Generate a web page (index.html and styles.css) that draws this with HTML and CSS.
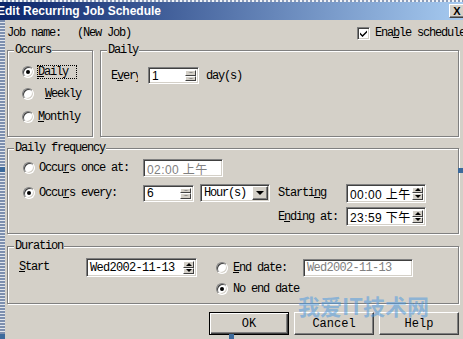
FILE: index.html
```html
<!DOCTYPE html>
<html lang="en">
<head>
  <meta charset="UTF-8" />
  <title>Edit Recurring Job Schedule</title>
  <link rel="stylesheet" href="styles.css">
</head>
<body>
  <div class="window">
    <div class="dots"></div>
    <div class="titlebar">
      <span class="title">Edit Recurring Job Schedule</span>
      <span class="close">X</span>
    </div>
    <div class="frame">
      <div class="edge"></div>
      <div class="content">
        <div class="jobrow">
          <span class="jobname">Job name:</span>
          <span>(New Job)</span>
          <span class="enable">
            <span class="checkbox">
              <svg width="9" height="9" viewBox="0 0 9 9"><path d="M1 3.5 L3.5 6 L8 1.5 L8 3.5 L3.5 8 L1 5.5 Z" fill="#000"/></svg>
            </span>
            <span>Ena<u>b</u>le schedule</span>
          </span>
        </div>

        <div class="toprow">
          <div class="group occurs">
            <span class="legend">Occurs</span>
            <div class="option"><span class="radio on"></span><span class="focus"><u>D</u>aily</span></div>
            <div class="option"><span class="radio"></span><span class="indent"><u>W</u>eekly</span></div>
            <div class="option"><span class="radio"></span><span><u>M</u>onthly</span></div>
          </div>
          <div class="group daily">
            <span class="legend">Daily</span>
            <div class="every">
              <span class="every-label">E<u>v</u>ery</span>
              <span class="field num spin-every">1<span class="spinbtns faint"><i class="up"></i><i class="down"></i></span></span>
              <span class="days">day(s)</span>
            </div>
          </div>
        </div>

        <div class="group freq">
          <span class="legend">Daily frequency</span>
          <div class="frow frow1">
            <span class="fopt"><span class="radio"></span><span>Occu<u>r</u>s once at:</span></span>
            <span class="field time disabled once">02:00 上午</span>
          </div>
          <div class="frow frow2">
            <span class="fopt"><span class="radio on"></span><span>Occu<u>r</u>s every:</span></span>
            <span class="field num spin-six">6<span class="spinbtns faint"><i class="up"></i><i class="down"></i></span></span>
            <span class="field select">Hour(s)<span class="dropbtn"><i class="down"></i></span></span>
            <span class="tlabel">Starti<u>n</u>g</span>
            <span class="field time clock">00:00 上午<span class="spinbtns"><i class="up"></i><i class="down"></i></span></span>
          </div>
          <div class="frow frow3">
            <span class="tlabel">E<u>n</u>ding at:</span>
            <span class="field time clock">23:59 下午<span class="spinbtns"><i class="up"></i><i class="down"></i></span></span>
          </div>
        </div>

        <div class="group duration">
          <span class="legend">Duration</span>
          <span class="start-label"><u>S</u>tart</span>
          <span class="field date start-date">Wed2002-11-13<span class="spinbtns"><i class="up"></i><i class="down"></i></span></span>
          <div class="dcol">
            <div class="drow drow1">
              <span class="radio"></span>
              <span class="end-label"><u>E</u>nd date:</span>
              <span class="field date disabled end-date">Wed2002-11-13</span>
            </div>
            <div class="drow drow2">
              <span class="radio on"></span>
              <span>No end date</span>
            </div>
          </div>
        </div>

        <div class="buttons">
          <button class="btn default">OK</button>
          <button class="btn">Cancel</button>
          <button class="btn">Help</button>
        </div>
      </div>
    </div>

    <span class="handle h-left"></span>
    <span class="handle h-right"></span>
    <span class="handle h-bottom"></span>
    <span class="handle h-corner"></span>
    <span class="watermark">我爱IT技术网</span>
  </div>
</body>
</html>
```

FILE: styles.css
```css
body {
  margin: 0;
  background-color: #d4d0c8;
  font-family: "Liberation Mono", "Courier New", "Noto Sans CJK SC", monospace;
  font-size: 12px;
  letter-spacing: -1.2px;
  color: #000;
  overflow: hidden;
}

.window {
  position: relative;
  width: 463px;
  height: 339px;
  overflow: hidden;
}

.dots {
  height: 2px;
  background: repeating-linear-gradient(90deg, #f2f4f8 0 2px, #8a9bb8 2px 4px);
}

.titlebar {
  display: flex;
  align-items: center;
  height: 18px;
  background: linear-gradient(90deg, #0a246a, #a6caf0);
}

.title {
  margin-left: -3px;
  color: #fff;
  font: bold 12px "Liberation Sans Narrow", "Liberation Sans", Arial, sans-serif;
  letter-spacing: 0;
  white-space: nowrap;
}

.close {
  margin-left: auto;
  margin-right: -2px;
  width: 16px;
  height: 14px;
  box-sizing: border-box;
  background-color: #d4d0c8;
  border: 1px solid;
  border-color: #fff #404040 #404040 #fff;
  box-shadow: inset -1px -1px #808080;
  font: bold 11px "Liberation Sans", Arial, sans-serif;
  letter-spacing: 0;
  line-height: 12px;
  text-align: center;
}

.frame {
  display: flex;
  height: 319px;
}

.edge {
  width: 5px;
  background: repeating-linear-gradient(180deg, #7d8fae 0 2px, #e2e6ec 2px 3px);
}

.content {
  flex: 1;
  min-width: 0;
  padding: 0 4px 0 2px;
}

/* job name row */

.jobrow {
  display: flex;
  align-items: center;
  height: 14px;
  margin-top: 6px;
  white-space: nowrap;
}

.jobname {
  width: 70px;
}

.enable {
  display: flex;
  align-items: center;
  gap: 5px;
  margin-left: auto;
  margin-right: -6px;
}

.checkbox {
  display: flex;
  align-items: center;
  justify-content: center;
  width: 13px;
  height: 13px;
  box-sizing: border-box;
  background-color: #fff;
  border: 1px solid;
  border-color: #808080 #fff #fff #808080;
  box-shadow: inset 1px 1px #404040, inset -1px -1px #d4d0c8;
}

/* group boxes */

.group {
  position: relative;
  box-sizing: border-box;
  border: 1px solid #808080;
  box-shadow: inset 1px 1px #fff, 1px 1px #fff;
}

.legend {
  position: absolute;
  top: -7px;
  left: 6px;
  padding: 0 1px;
  line-height: 12px;
  background-color: #d4d0c8;
  white-space: nowrap;
}

.toprow {
  display: flex;
  gap: 7px;
  height: 87px;
  margin-top: 10px;
}

.occurs {
  display: flex;
  flex-direction: column;
  gap: 8px;
  width: 86px;
  padding: 14px 0 0 14px;
}

.option {
  display: flex;
  align-items: center;
  gap: 4px;
  height: 14px;
}

.option:last-child {
  margin-top: 1px;
}

.focus {
  display: inline-block;
  line-height: 12px;
  padding-right: 8px;
  outline: 1px dotted #000;
}

.indent {
  padding-left: 7px;
}

.radio {
  position: relative;
  flex: none;
  width: 12px;
  height: 12px;
  box-sizing: border-box;
  border-radius: 50%;
  background-color: #fff;
  border: 1px solid;
  border-color: #808080 #fff #fff #808080;
  box-shadow: inset 1px 1px #404040, inset -1px -1px #d4d0c8;
}

.radio.on::after {
  content: "";
  position: absolute;
  left: 3px;
  top: 3px;
  width: 4px;
  height: 4px;
  border-radius: 50%;
  background-color: #000;
}

.daily {
  flex: 1;
  padding: 16px 0 0 10px;
}

.every {
  display: flex;
  align-items: center;
  height: 17px;
}

.every-label {
  width: 27px;
  margin-right: 10px;
  overflow: hidden;
  white-space: nowrap;
}

.days {
  margin-left: 7px;
}

/* fields */

.field {
  display: flex;
  align-items: center;
  box-sizing: border-box;
  padding-left: 3px;
  background-color: #fff;
  border: 1px solid;
  border-color: #808080 #fff #fff #808080;
  box-shadow: inset 1px 1px #404040, inset -1px -1px #d4d0c8;
  white-space: nowrap;
}

.field.num,
.field.time {
  font-family: "Liberation Sans", "Noto Sans CJK SC", sans-serif;
  letter-spacing: 0;
}

.field.time {
  letter-spacing: 0.4px;
}

.field.date {
  letter-spacing: -0.7px;
}

.field.disabled {
  color: #808080;
}

.spin-every,
.spin-six {
  width: 51px;
  height: 17px;
}

.spinbtns {
  display: flex;
  flex-direction: column;
  width: 13px;
  height: 100%;
  margin-left: auto;
  padding: 2px 2px 2px 0;
  box-sizing: border-box;
}

.spinbtns i,
.dropbtn {
  display: flex;
  align-items: center;
  justify-content: center;
  flex: 1;
  background-color: #d4d0c8;
  border: 1px solid;
  border-color: #fff #404040 #404040 #fff;
  box-sizing: border-box;
}

.spinbtns i::after,
.dropbtn i::after {
  content: "";
  border-left: 3px solid transparent;
  border-right: 3px solid transparent;
}

.spinbtns i.up::after {
  border-bottom: 3px solid #000;
}

.spinbtns i.down::after,
.dropbtn i::after {
  border-top: 3px solid #000;
}

.spinbtns.faint i.up::after {
  border-bottom: 1px solid #808080;
}

.spinbtns.faint i.down::after {
  border-top: 1px solid #808080;
}

.dropbtn {
  flex: none;
  width: 16px;
  height: 14px;
  margin-left: auto;
  margin-right: 1px;
  box-shadow: inset -1px -1px #808080;
}

.dropbtn i::after {
  display: block;
  border-left-width: 4px;
  border-right-width: 4px;
  border-top-width: 4px;
}

/* daily frequency */

.freq {
  height: 86px;
  margin-top: 11px;
  padding: 10px 0 0 15px;
}

.frow {
  display: flex;
  align-items: center;
}

.frow1 {
  height: 18px;
}

.frow2 {
  height: 20px;
  margin-top: 6px;
}

.frow3 {
  height: 19px;
  margin-top: 4px;
  padding-left: 255px;
}

.fopt {
  display: flex;
  align-items: center;
  gap: 4px;
  width: 120px;
  white-space: nowrap;
}

.once {
  width: 80px;
  height: 18px;
}

.select {
  width: 70px;
  height: 18px;
  margin-left: 6px;
}

.tlabel {
  width: 68px;
  margin-left: 8px;
  white-space: nowrap;
}

.frow3 .tlabel {
  margin-left: 0;
}

.clock {
  width: 80px;
  height: 19px;
}

/* duration */

.duration {
  display: flex;
  height: 58px;
  margin-top: 12px;
  padding: 11px 0 0 11px;
}

.start-label {
  width: 67px;
  line-height: 19px;
}

.start-date {
  width: 111px;
  height: 19px;
}

.dcol {
  margin-left: 19px;
}

.drow {
  display: flex;
  align-items: center;
  white-space: nowrap;
}

.drow1 {
  height: 19px;
}

.drow2 {
  gap: 5px;
  height: 12px;
  margin-top: 6px;
}

.end-label {
  width: 70px;
  margin-left: 5px;
}

.end-date {
  width: 110px;
  height: 18px;
}

/* buttons */

.buttons {
  display: flex;
  justify-content: flex-end;
  gap: 5px;
  margin-top: 8px;
}

.btn {
  width: 80px;
  height: 23px;
  padding: 0;
  background-color: #d4d0c8;
  border: 1px solid;
  border-color: #fff #404040 #404040 #fff;
  box-shadow: inset -1px -1px #808080;
  font: inherit;
  color: #000;
}

.btn.default {
  border-color: #000;
  box-shadow: inset 1px 1px #fff, inset -1px -1px #404040, inset -2px -2px #808080;
}

/* selection handles and watermark */

.handle {
  position: absolute;
  width: 5px;
  height: 5px;
  background-color: #3c6a9c;
}

.h-left {
  left: 0;
  top: 167px;
}

.h-right {
  left: 458px;
  top: 168px;
}

.h-bottom {
  left: 229px;
  top: 334px;
}

.h-corner {
  left: 0;
  top: 334px;
}

.watermark {
  position: absolute;
  left: 298px;
  top: 289px;
  font: bold 22px "Noto Sans CJK SC", sans-serif;
  letter-spacing: 0;
  color: rgba(70, 150, 225, 0.5);
  pointer-events: none;
}
```
